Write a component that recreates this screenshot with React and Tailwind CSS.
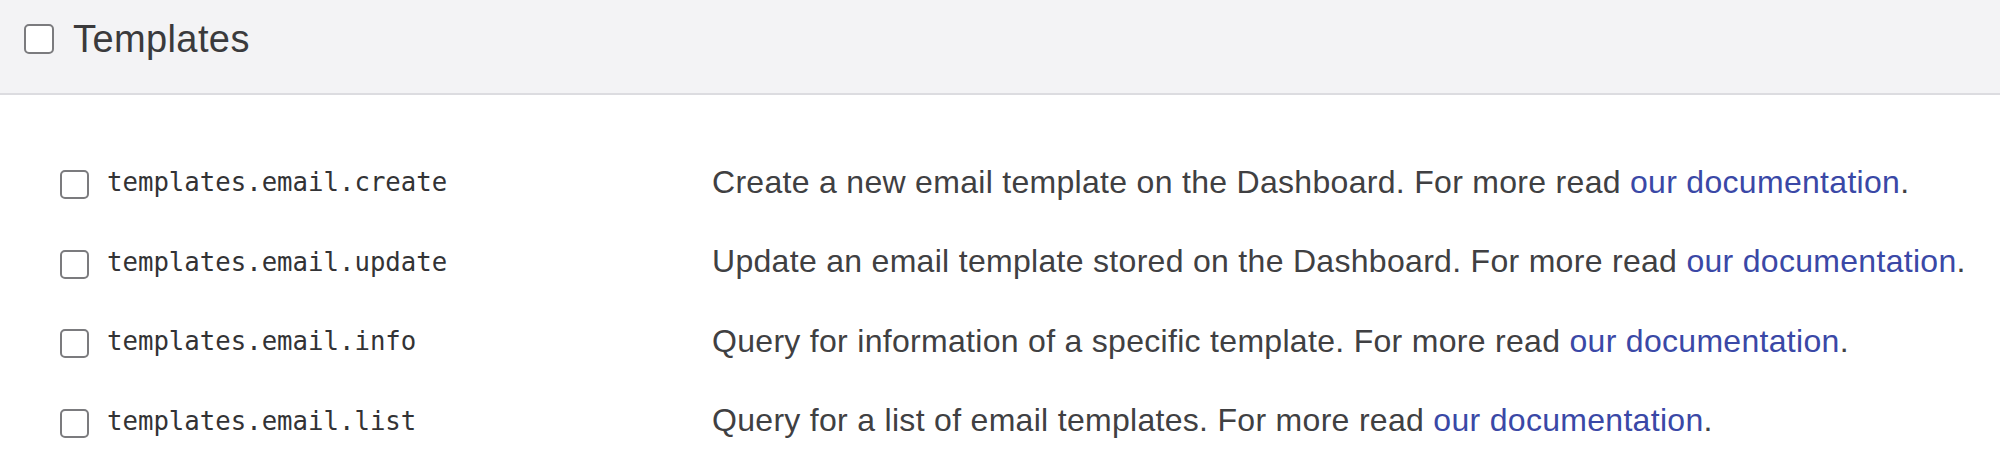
import React from 'react';

const scopes = [
  { name: 'templates.email.create', desc: 'Create a new email template on the Dashboard. For more read ' },
  { name: 'templates.email.update', desc: 'Update an email template stored on the Dashboard. For more read ' },
  { name: 'templates.email.info', desc: 'Query for information of a specific template. For more read ' },
  { name: 'templates.email.list', desc: 'Query for a list of email templates. For more read ' },
];

const Box = ({ size }) => (
  <div className={`${size} shrink-0 rounded-[5px] border-2 border-[#7b7b7e] bg-white`} />
);

const App = () => {
  return (
    <div className="w-[2000px] h-[466px] bg-white overflow-hidden" style={{ fontFamily: '"Liberation Sans", Arial, sans-serif' }}>
      {/* Section header */}
      <div className="h-[95px] bg-[#f3f3f5] border-b-2 border-[#dcdce0] flex items-center pl-[24px] pb-[15px]">
        <Box size="w-[30px] h-[30px]" />
        <span className="ml-[19px] text-[38px] tracking-[0.4px] leading-none text-[#3a3a3c]">Templates</span>
      </div>

      {/* Scope rows */}
      <div className="pt-[50px] pl-[60px]">
        {scopes.map(s => (
          <div key={s.name} className="h-[79.5px] flex items-center">
            <Box size="w-[29px] h-[29px]" />
            <span
              className="ml-[18px] w-[605px] shrink-0 pb-[3px] text-[25.7px] leading-none text-[#333335]"
              style={{ fontFamily: '"DejaVu Sans Mono", "Liberation Mono", monospace' }}
            >
              {s.name}
            </span>
            <span className="pb-[6px] text-[32px] tracking-[0.3px] leading-none text-[#404042] whitespace-nowrap">
              {s.desc}
              <a href="#" className="text-[#3a48a6]">our documentation</a>.
            </span>
          </div>
        ))}
      </div>
    </div>
  );
};

export default App;
